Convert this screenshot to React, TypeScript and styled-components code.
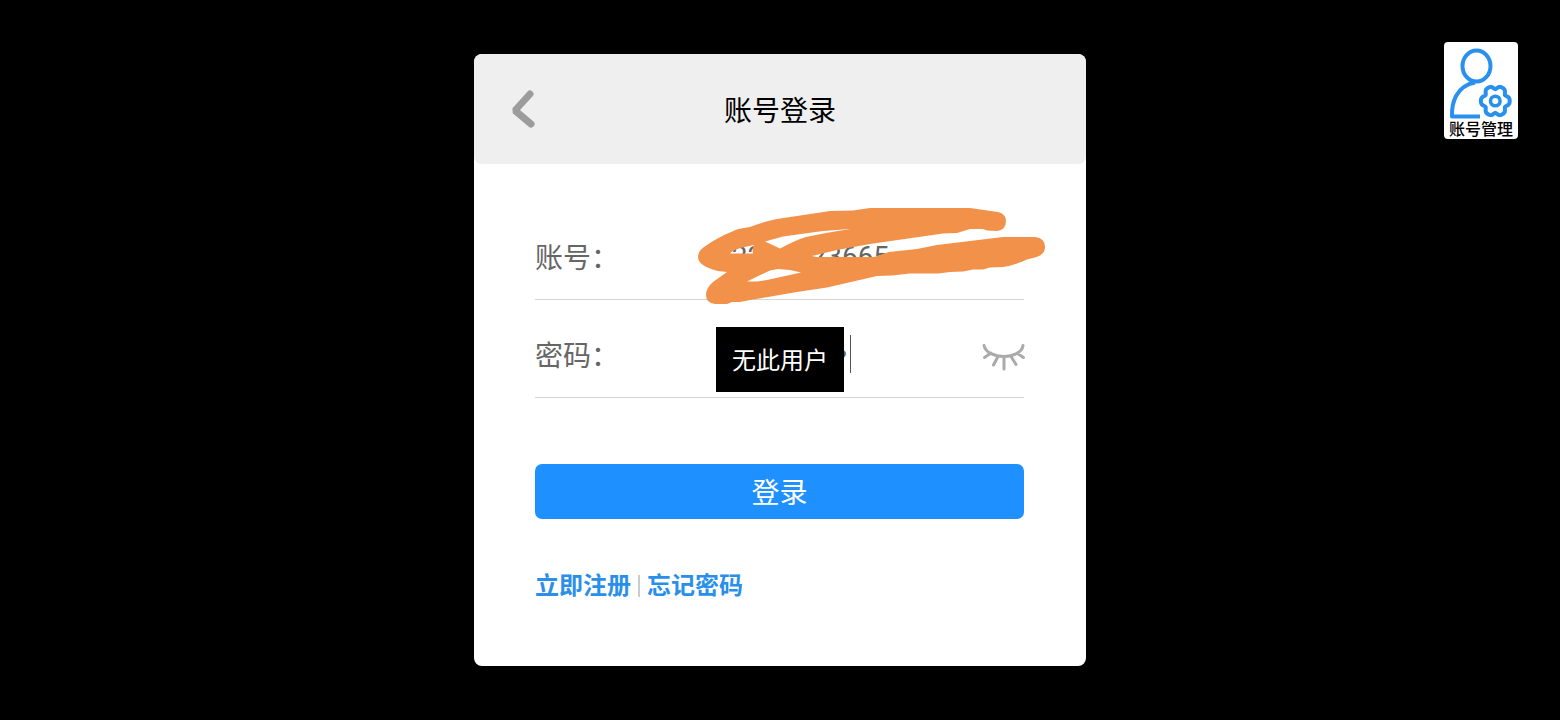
import React from 'react';
import styled, { createGlobalStyle } from 'styled-components';

const GlobalStyle = createGlobalStyle`
  * { box-sizing: border-box; }
  body {
    margin: 0;
    background: #000;
    font-family: Roboto, "Noto Sans CJK SC", sans-serif;
  }
`;

const Page = styled.div`
  position: relative;
  min-height: 100vh;
  display: flex;
  align-items: center;
  justify-content: center;
  background: #000;
`;

const Card = styled.main`
  width: 100%;
  max-width: 612px;
  background: #fff;
  border-radius: 8px;
`;

const Header = styled.header`
  display: grid;
  grid-template-columns: 100px 1fr 100px;
  align-items: center;
  height: 110px;
  padding-top: 6px;
  background: #efefef;
  border-radius: 8px;
`;

const BackButton = styled.button`
  display: flex;
  justify-content: center;
  padding: 0 2px 6px 0;
  border: 0;
  background: none;
  cursor: pointer;
`;

const Title = styled.h1`
  margin: 0;
  text-align: center;
  font-size: 28px;
  line-height: 40px;
  font-weight: 400;
  color: #000;
`;

const Form = styled.form`
  padding: 38px 62px 62px 61px;
`;

const Row = styled.div`
  position: relative;
  display: flex;
  align-items: center;
  height: 98px;
  padding-top: 16px;
  border-bottom: 1px solid #d5d5d5;
`;

const Label = styled.label`
  width: 181px;
  flex: none;
  font-size: 28px;
  line-height: 40px;
  color: #666;
`;

const Field = styled.input`
  flex: 1;
  min-width: 0;
  height: 40px;
  padding: 0 0 4px;
  border: 0;
  outline: 0;
  background: transparent;
  font-family: inherit;
  font-size: 28px;
  color: #666;

  &[type='password'] {
    padding-left: 2px;
    font-family: "DejaVu Sans", sans-serif;
  }
`;

const Caret = styled.span`
  position: absolute;
  left: 315px;
  top: 35px;
  width: 1px;
  height: 38px;
  background: #555;
`;

const EyeButton = styled.button`
  display: flex;
  flex: none;
  margin-right: -2px;
  padding: 0;
  border: 0;
  background: none;
  cursor: pointer;
`;

const Scribble = styled.svg`
  position: absolute;
  left: 163px;
  top: 6px;
  pointer-events: none;
`;

const Toast = styled.div`
  position: absolute;
  left: 181px;
  top: 27px;
  padding: 18px 16px 14px;
  background: #000;
  color: #fff;
  font-size: 24px;
  line-height: 33px;
  white-space: nowrap;
`;

const Submit = styled.button`
  display: block;
  width: 100%;
  height: 55px;
  margin-top: 66px;
  padding: 4px 0 0;
  border: 0;
  border-radius: 7px;
  background: #1e90ff;
  color: #fff;
  font-family: inherit;
  font-size: 28px;
  line-height: 40px;
  cursor: pointer;
`;

const Links = styled.nav`
  display: flex;
  align-items: center;
  gap: 7px;
  margin-top: 49px;
`;

const TextLink = styled.a`
  color: #2a8fe8;
  font-size: 24px;
  line-height: 36px;
  font-weight: 700;
  text-decoration: none;
`;

const Divider = styled.span`
  width: 2px;
  height: 22px;
  background: #ccc;
`;

const AccountButton = styled.button`
  position: absolute;
  top: 42px;
  right: 42px;
  display: flex;
  flex-direction: column;
  align-items: center;
  width: 74px;
  height: 97px;
  padding: 0;
  border: 0;
  border-radius: 4px;
  background: #fff;
  color: #000;
  font-family: inherit;
  font-size: 16px;
  line-height: 18px;
  font-weight: 500;
  cursor: pointer;

  svg {
    flex: none;
  }
`;

function BackIcon() {
  return (
    <svg width="24" height="38" viewBox="0 0 24 38" fill="none" stroke="#9c9c9c" strokeWidth="7" strokeLinecap="round">
      <path d="M19 4 L4 20.500 L20 34" strokeLinejoin="bevel" />
    </svg>
  );
}

function ClosedEyeIcon() {
  return (
    <svg width="44" height="28" viewBox="0 0 44 28" fill="none" stroke="#aaa" strokeWidth="3" strokeLinecap="round">
      <path d="M2 2.500 C5 17 39 17 41 2.500 M9 10 L2.500 14.500 M16 13.500 L11.500 22 M22 14 V26 M29 13.500 L34 21.500 M35 10 L41.500 14.500" />
    </svg>
  );
}

// Six-lobed gear outline around (cx, cy)
function gearPath(cx: number, cy: number) {
  const points: string[] = [];
  for (let deg = 0; deg < 360; deg += 5) {
    const a = (deg * Math.PI) / 180;
    const r = 13.2 + 1.6 * Math.cos(6 * a) - 0.4 * Math.cos(12 * a);
    points.push(`${(cx + r * Math.cos(a)).toFixed(2)} ${(cy + r * 1.06 * Math.sin(a)).toFixed(2)}`);
  }
  return `M${points.join(' L')} Z`;
}

function AccountIcon() {
  return (
    <svg width="74" height="79" viewBox="0 0 74 79" fill="none" stroke="#2a90ee" strokeWidth="4" strokeLinejoin="round">
      <ellipse cx="32.500" cy="24" rx="14" ry="15.500" />
      <path d="M36 74.500 H8 C7.500 61 12 44 31 40.500" />
      <path d={gearPath(51.3, 59)} />
      <circle cx="51.300" cy="59" r="4.800" strokeWidth="3.500" />
    </svg>
  );
}

function ScribbleMark() {
  return (
    <Scribble width="347" height="96" viewBox="698 208 347 96" aria-hidden="true">
      <path
        fill="#f2924a"
        fillRule="evenodd"
        d="M698 257 Q698 251 704 247 L713 241 Q725 234 738 229 L750 227 Q762 222 777 219 L830 211 L853 210.500 L870 208 H970 L998 212 Q1006 214 1006 221 Q1006 230 997 231 L987 230.500 L983 229 H970 L957 233 L943 233.500 L870 244 L837 250 L812 256 L816 257 H874 L889 252 L917 249 L937 245 L1003 237 H1035 Q1045 238 1045 247 Q1045 255 1035 257.500 L1027 259.500 Q1015 265 1003 267 L990 267.500 L983 269.500 H973 L963 271.500 L950 272 L938 273.500 H910 L892 275.500 L877 276 L827 287.500 L797 292 L753 299.500 L740 302 H732 L727 304 H715 Q706 303 706 295 Q706 288 713 282 L727 272 L718 271 Q698 266 698 257 Z
        M730 253.500 Q733 250 740 248 L754 245 Q752 249 753 253.500 Z
        M765 241.500 L783 236.500 L823 231 L850 229 L826 233 L806 237 Q796 240 780 248.500 Z
        M747 281.500 L770 270.500 L778 269 L790 270 L801 272.500 L767 280 L757 281.500 Z"
      />
    </Scribble>
  );
}

export default function App() {
  return (
    <Page>
      <GlobalStyle />
      <Card>
        <Header>
          <BackButton type="button" aria-label="返回">
            <BackIcon />
          </BackButton>
          <Title>账号登录</Title>
        </Header>
        <Form onSubmit={(e) => e.preventDefault()}>
          <Row>
            <Label htmlFor="account">账号：</Label>
            <Field id="account" type="text" defaultValue={'\u2007' + '22' + '\u2007\u2007\u2007' + '23665'} />
            <ScribbleMark />
          </Row>
          <Row>
            <Label htmlFor="password">密码：</Label>
            <Field id="password" type="password" defaultValue="00000000" />
            <Caret />
            <EyeButton type="button" aria-label="显示密码">
              <ClosedEyeIcon />
            </EyeButton>
            <Toast role="alert">无此用户</Toast>
          </Row>
          <Submit type="submit">登录</Submit>
          <Links>
            <TextLink href="#register">立即注册</TextLink>
            <Divider />
            <TextLink href="#forgot">忘记密码</TextLink>
          </Links>
        </Form>
      </Card>
      <AccountButton type="button">
        <AccountIcon />
        账号管理
      </AccountButton>
    </Page>
  );
}
